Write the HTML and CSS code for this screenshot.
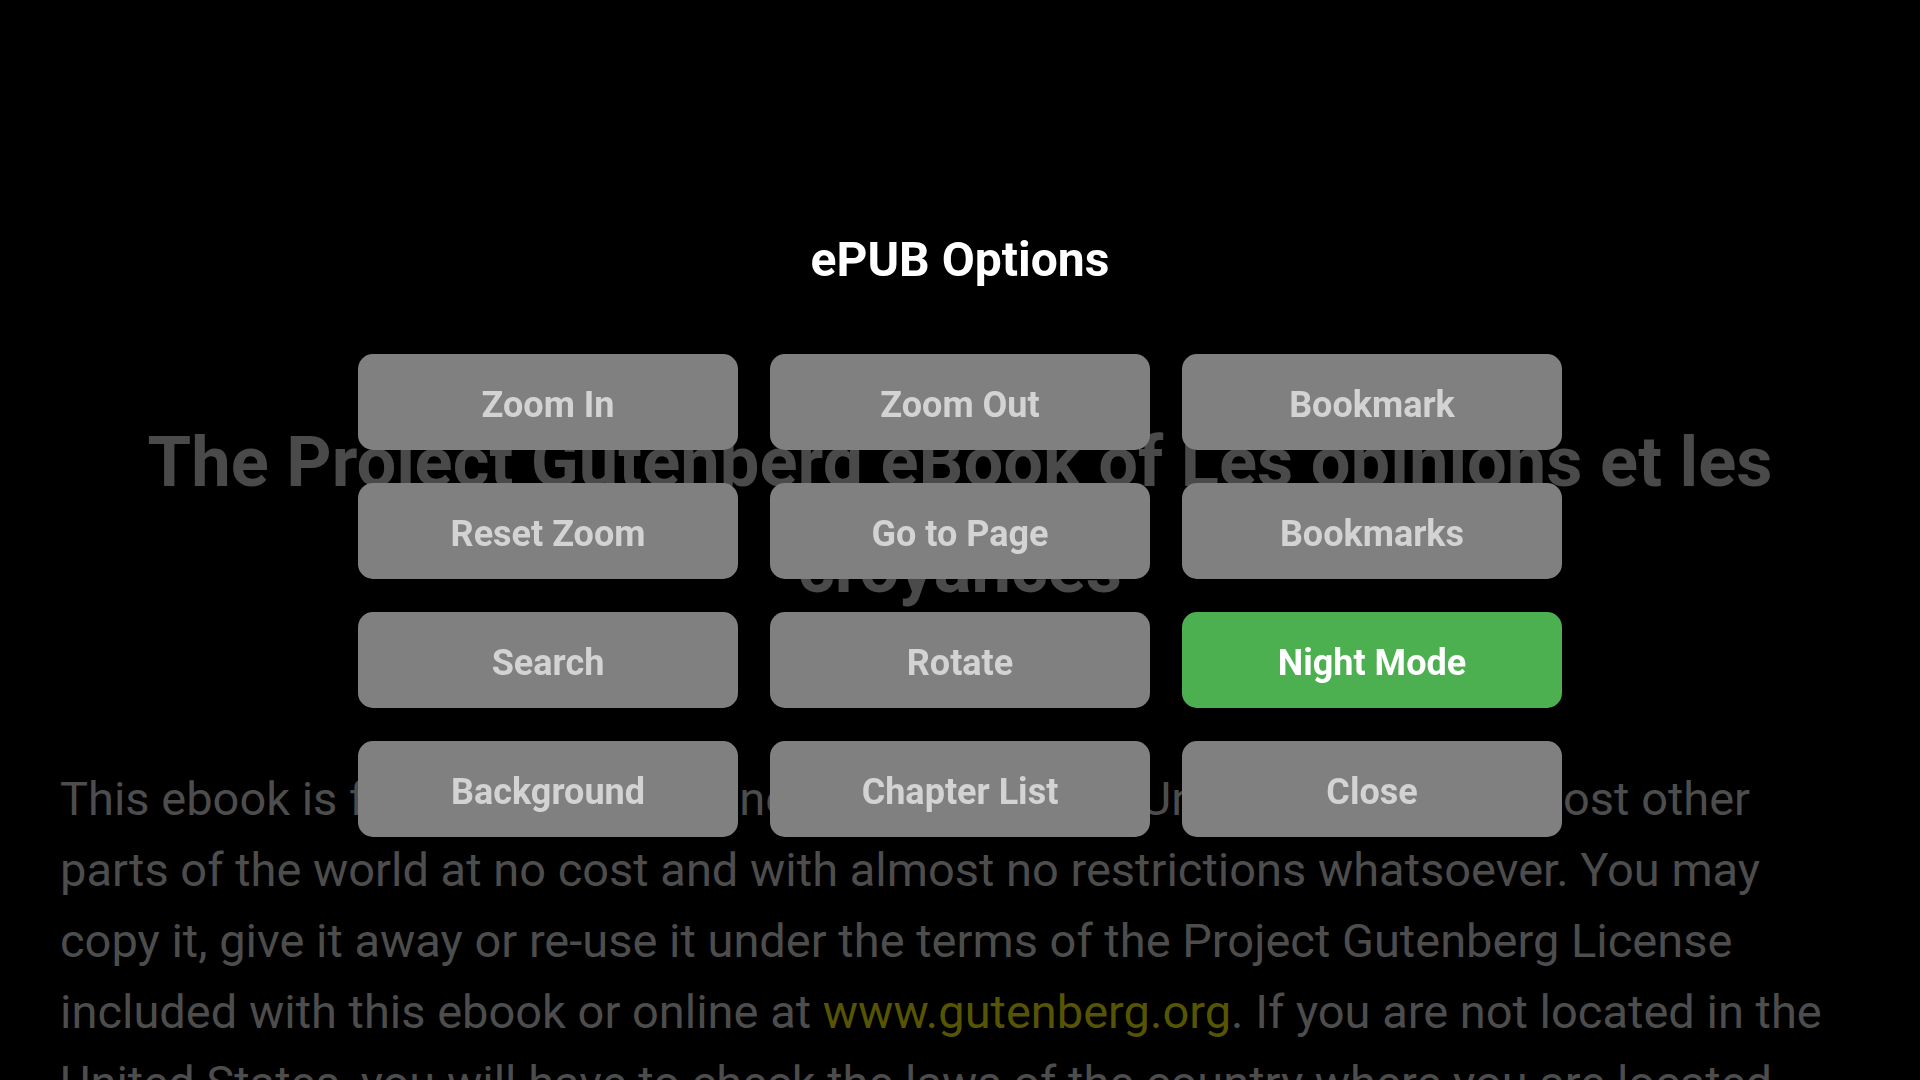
FILE: index.html
```html
<!DOCTYPE html>
<html lang="en">
<head>
<meta charset="utf-8">
<title>ePUB Options</title>
<link rel="stylesheet" href="styles.css">
</head>
<body>
<main class="page">
  <h1 class="book-title">The Project Gutenberg eBook of Les opinions et les croyances</h1>
  <p class="book-text">This ebook is for the use of anyone anywhere in the United States and most other parts of the world at no cost and with almost no restrictions whatsoever. You may copy it, give it away or re-use it under the terms of the Project Gutenberg License included with this ebook or online at <a class="book-link" href="#">www.gutenberg.org</a>. If you are not located in the United States, you will have to check the laws of the country where you are located before using this eBook.</p>
</main>
<div class="overlay">
  <div class="dialog">
    <h2 class="dialog-title">ePUB Options</h2>
    <div class="options">
      <button class="opt">Zoom In</button>
      <button class="opt">Zoom Out</button>
      <button class="opt">Bookmark</button>
      <button class="opt">Reset Zoom</button>
      <button class="opt">Go to Page</button>
      <button class="opt">Bookmarks</button>
      <button class="opt">Search</button>
      <button class="opt">Rotate</button>
      <button class="opt opt-active">Night Mode</button>
      <button class="opt">Background</button>
      <button class="opt">Chapter List</button>
      <button class="opt">Close</button>
    </div>
  </div>
</div>
</body>
</html>
```
FILE: styles.css
```css
html, body {
  margin: 0;
  padding: 0;
  background: #000;
  height: 100%;
  overflow: hidden;
}
body {
  font-family: Roboto, "Noto Sans", "Liberation Sans", sans-serif;
}
.page {
  padding: 409px 60px 0 60px;
}
.book-title {
  margin: 0 0 142px 0;
  font-size: 70.5px;
  line-height: 106px;
  font-weight: 700;
  text-align: center;
  color: #4a4a4a;
}
.book-text {
  margin: 0;
  font-size: 47px;
  line-height: 71px;
  font-weight: 400;
  color: #4d4d4d;
}
.book-link {
  color: #575503;
  text-decoration: none;
}
.overlay {
  position: fixed;
  inset: 0;
  display: flex;
  justify-content: center;
  align-items: flex-start;
  padding-top: 232px;
}
.dialog {
  display: flex;
  flex-direction: column;
  align-items: center;
  gap: 66px;
}
.dialog-title {
  margin: 0;
  font-size: 48px;
  font-weight: 700;
  line-height: 56px;
  color: #fff;
}
.options {
  display: grid;
  grid-template-columns: repeat(3, 380px);
  grid-auto-rows: 96px;
  column-gap: 32px;
  row-gap: 33px;
}
.opt {
  border: none;
  margin: 0;
  padding: 6px 0 0 0;
  border-radius: 15px;
  background: #808080;
  color: #d3d3d3;
  font-family: Roboto, "Noto Sans", "Liberation Sans", sans-serif;
  font-size: 36px;
  font-weight: 700;
  cursor: pointer;
}
.opt-active {
  background: #4caf50;
  color: #fff;
}
```
